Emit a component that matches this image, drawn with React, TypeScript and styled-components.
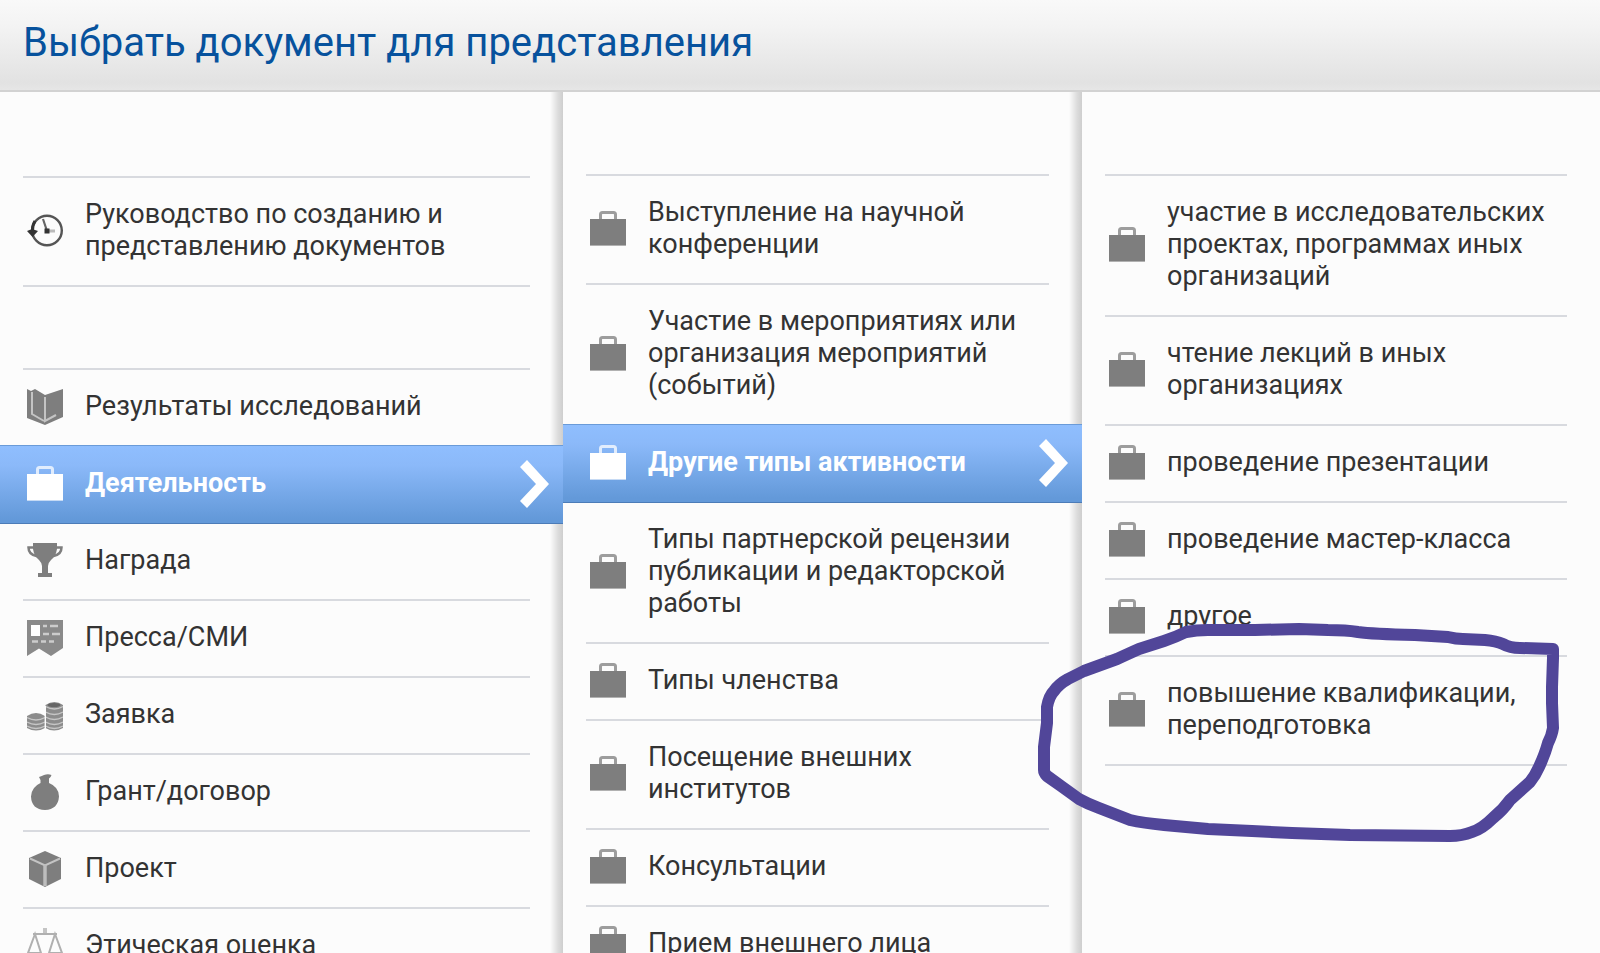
import React from "react";
import styled, { createGlobalStyle, css } from "styled-components";

const Global = createGlobalStyle`
  * { box-sizing: border-box; }
  body { margin: 0; overflow: hidden; background: #fcfcfc; color: #333; font-family: Roboto, "Liberation Sans", sans-serif; }
`;

const Page = styled.div`
  display: flex;
  flex-direction: column;
  height: 100vh;
  overflow: hidden;
`;

const Header = styled.header`
  flex: none;
  height: 92px;
  padding: 0 23px 4px;
  display: flex;
  align-items: center;
  border-bottom: 2px solid #d2d2d2;
  background: linear-gradient(#f9f9f9, #f3f3f3 30%, #e2e2e2 92%, #e6e6e6);
`;

const Title = styled.h1`
  margin: 0;
  font-size: 40px;
  line-height: 48px;
  font-weight: 400;
  color: #07529d;
`;

const Columns = styled.main`
  flex: 1;
  min-height: 0;
  display: grid;
  grid-template-columns: 563fr 519fr 518fr;
`;

const Column = styled.nav<{ $shaded?: boolean; $top: number }>`
  min-width: 0;
  padding: ${(p) => p.$top}px 33px 0 23px;
  background: ${(p) =>
    p.$shaded ? "linear-gradient(to left, #cecece, #dcdcdc 5px, #fcfcfc 13px)" : "none"};
`;

const List = styled.ul`
  list-style: none;
  margin: 0;
  padding: 0;
  border-top: 2px solid #d8dadf;
  & + & { margin-top: 81px; }
`;

const Item = styled.li<{ $active?: boolean }>`
  position: relative;
  border-bottom: 2px solid #d8dadf;
  ${(p) =>
    p.$active &&
    css`
      margin: -2px -33px 0 -23px;
      padding: 1px 14px 1px 23px;
      border-top: 1px solid #6a9bd8;
      border-bottom: 1px solid #4c7cb8;
      background: linear-gradient(#8fbefe, #8bb9f9 25%, #6399d9 95%);
    `}
`;

const Link = styled.a<{ $active?: boolean }>`
  display: flex;
  align-items: center;
  min-height: 75px;
  padding: 20px 0 23px 4px;
  color: ${(p) => (p.$active ? "#fff" : "#333")};
  font-size: 27px;
  line-height: 32px;
  font-weight: ${(p) => (p.$active ? 700 : 400)};
  text-decoration: none;
`;

const IconBox = styled.svg<{ $active?: boolean }>`
  flex: none;
  width: 36px;
  height: 36px;
  margin: -3px 22px -5px 0;
  color: ${(p) => (p.$active ? "#fff" : "#7e7e7e")};
`;

const Label = styled.span`
  flex: 1;
  min-width: 0;
`;

const Chevron = styled.svg`
  flex: none;
  width: 29px;
  height: 48px;
  margin: -7px 0 -9px;
`;

const Scribble = styled.svg`
  position: absolute;
  left: -75px;
  top: -47px;
  width: 540px;
  height: 240px;
  pointer-events: none;
`;

type IconName =
  | "clock" | "book" | "case" | "cup" | "press" | "coins" | "bag" | "cube" | "scales";

const shapes: Record<IconName, React.ReactNode> = {
  case: (
    <>
      <path d="M0 8h36v26H0z" fill="currentColor" />
      <path d="M0 34h36v1H0z" fill="currentColor" opacity=".6" />
      <path d="M10.500 8V3.500q0-2 2-2h11q2 0 2 2V8" fill="none" stroke="currentColor" strokeWidth="3" opacity=".75" />
    </>
  ),
  clock: (
    <>
      <circle cx="20" cy="17.500" r="14.800" fill="none" stroke="#555" strokeWidth="2.400" />
      <path d="M8 8q-3 5-2.500 10" fill="none" stroke="#333" strokeWidth="3" />
      <path d="M0 18l5-2 6 2-5.500 6z" fill="#333" />
      <path d="M16 6l4 12" stroke="#666" strokeWidth="2.200" />
      <path d="M20 18h8" stroke="#bbb" strokeWidth="3" />
      <path d="M17.500 15.500h5v5h-5z" fill="#333" />
    </>
  ),
  book: (
    <>
      <path d="M0 0l4 2 4-2 10 6L36 0v28l-18 8L0 29z" fill="currentColor" />
      <path d="M5 3v22l12 7M18 8v24l11-6" fill="none" stroke="#c4c4c4" strokeWidth="2" />
    </>
  ),
  cup: (
    <>
      <path d="M6 0h24q1 12-6 17-3 3-3 6v7h4v4H11v-4h4v-7q0-3-3-6Q5 12 6 0z" fill="currentColor" />
      <path d="M6 4.500H1.500q0 7 8 8.500M30 4.500h4.500q0 7-8 8.500" fill="none" stroke="currentColor" strokeWidth="2.500" />
    </>
  ),
  press: (
    <>
      <path d="M0 0h36v28l-12 8-12-7.500L0 36z" fill="#8a8a8a" />
      <path d="M4 5h9v11H4z" fill="#fff" />
      <path d="M16 6h4m3 0h8M16 14h6m3 0h8M5 21.500h6m3 0h5m3 0h5" stroke="#ccc" strokeWidth="2.500" />
    </>
  ),
  coins: (
    <>
      <path d="M0 19q9-6 18 0v12q-9 5-18 0zM18.500 8q9-6 17.500 0v23q-9 5-17.500 0z" fill="#8c8c8c" />
      <ellipse cx="27" cy="8" rx="6.500" ry="2" fill="#666" />
      <path
        d="M0 20.500q9 5 18 0M0 25q9 5 18 0M0 29q9 5 18 0M18.500 9.500q9 5 17.500 0M18.500 15q9 5 17.500 0M18.500 20q9 5 17.500 0M18.500 25q9 5 17.500 0M18.500 29q9 5 17.500 0"
        fill="none" stroke="#c6c6c6" strokeWidth="1.300"
      />
      <path d="M18.300 9v24" stroke="#fcfcfc" strokeWidth="1.400" />
    </>
  ),
  bag: (
    <path d="M12 3q3-1 5-2 4-1.500 7.500 0-1 3-2.500 3.500V9q10 4 10 13.500Q31 35.500 18 36 4.500 35.500 4 22.500 4.500 13 13.500 9V6z" fill="currentColor" />
  ),
  cube: (
    <>
      <path d="M18 0l16 7v21l-16 8L2 28V7z" fill="currentColor" />
      <path d="M3 7.500l15 7 15-7" fill="none" stroke="#c4c4c4" strokeWidth="2" />
      <path d="M18 14v21" stroke="#bdbdbd" strokeWidth="3.500" />
    </>
  ),
  scales: (
    <>
      <path d="M18 0v6" stroke="#c4c4c4" strokeWidth="4" />
      <path d="M6 6h24M8 6L1 25h13zM28 6l-6 19h13z" fill="none" stroke="#b0b0b0" strokeWidth="2" />
    </>
  ),
};

const Icon = ({ name, active }: { name: IconName; active?: boolean }) => (
  <IconBox viewBox="0 0 36 36" $active={active} aria-hidden="true">
    {shapes[name]}
  </IconBox>
);

const HighlightLoop = () => (
  <Scribble viewBox="1030 610 540 240" aria-hidden="true">
    <path
      d="M1208 630L1255 630 1299 629 1328 630Q1346 630 1358 632 1372 634 1415 635L1448 637Q1456 639 1463 639L1485 640Q1496 641 1503 644 1510 648 1520 648L1553 649 1553 658 1552 687 1552 703 1553 728Q1552 735 1548 743 1545 754 1539 767 1535 776 1530 782L1510 800Q1503 810 1493 818 1482 829 1472 832 1462 836 1450 836L1350 835 1292 833 1252 831 1208 829 1164 825Q1143 823 1130 820L1099 808Q1088 804 1079 799L1061 786 1047 776Q1044 773 1044 770L1044 747 1047 723 1047 707Q1049 696 1054 691 1059 684 1068 679L1084 671 1117 659Q1130 653 1139 649L1164 641Q1176 637 1186 632 1196 630 1208 630z"
      fill="none" stroke="#514699" strokeWidth="12" strokeLinejoin="round"
    />
  </Scribble>
);

interface Entry {
  icon: IconName;
  text: string;
  active?: boolean;
  marked?: boolean;
}

const Menu = ({ entries }: { entries: Entry[] }) => (
  <List>
    {entries.map((e) => (
      <Item key={e.text} $active={e.active}>
        <Link href="#" $active={e.active} aria-current={e.active ? "true" : undefined}>
          <Icon name={e.icon} active={e.active} />
          <Label>{e.text}</Label>
          {e.active && (
            <Chevron viewBox="0 0 29 48" aria-hidden="true">
              <path d="M0 7L7 0l22 24L7 48l-7-7 16-17z" fill="#fff" />
            </Chevron>
          )}
        </Link>
        {e.marked && <HighlightLoop />}
      </Item>
    ))}
  </List>
);

const guide: Entry[] = [
  { icon: "clock", text: "Руководство по созданию и представлению документов" },
];

const kinds: Entry[] = [
  { icon: "book", text: "Результаты исследований" },
  { icon: "case", text: "Деятельность", active: true },
  { icon: "cup", text: "Награда" },
  { icon: "press", text: "Пресса/СМИ" },
  { icon: "coins", text: "Заявка" },
  { icon: "bag", text: "Грант/договор" },
  { icon: "cube", text: "Проект" },
  { icon: "scales", text: "Этическая оценка" },
];

const activities: Entry[] = [
  { icon: "case", text: "Выступление на научной конференции" },
  { icon: "case", text: "Участие в мероприятиях или организация мероприятий (событий)" },
  { icon: "case", text: "Другие типы активности", active: true },
  { icon: "case", text: "Типы партнерской рецензии публикации и редакторской работы" },
  { icon: "case", text: "Типы членства" },
  { icon: "case", text: "Посещение внешних институтов" },
  { icon: "case", text: "Консультации" },
  { icon: "case", text: "Прием внешнего лица" },
];

const others: Entry[] = [
  { icon: "case", text: "участие в исследовательских проектах, программах иных организаций" },
  { icon: "case", text: "чтение лекций в иных организациях" },
  { icon: "case", text: "проведение презентации" },
  { icon: "case", text: "проведение мастер-класса" },
  { icon: "case", text: "другое" },
  { icon: "case", text: "повышение квалификации, переподготовка", marked: true },
];

export default function App() {
  return (
    <Page>
      <Global />
      <Header>
        <Title>Выбрать документ для представления</Title>
      </Header>
      <Columns>
        <Column $shaded $top={84} aria-label="Категории">
          <Menu entries={guide} />
          <Menu entries={kinds} />
        </Column>
        <Column $shaded $top={82} aria-label="Деятельность">
          <Menu entries={activities} />
        </Column>
        <Column $top={82} aria-label="Другие типы активности">
          <Menu entries={others} />
        </Column>
      </Columns>
    </Page>
  );
}
